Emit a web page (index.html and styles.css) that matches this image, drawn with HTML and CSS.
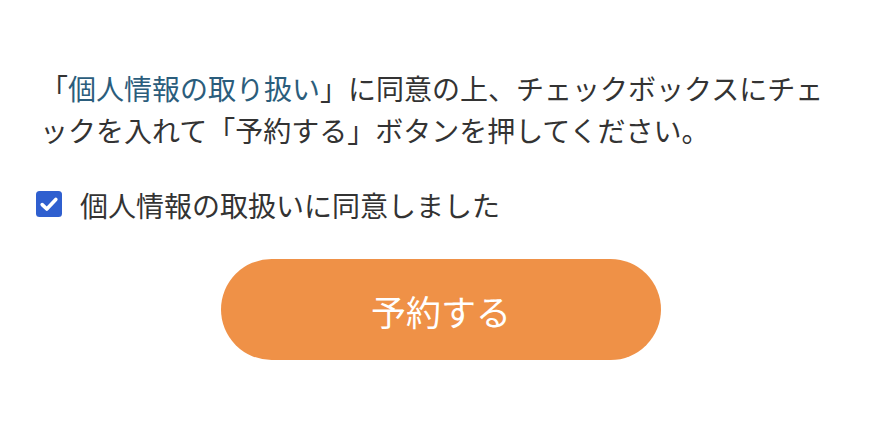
FILE: index.html
```html
<!DOCTYPE html>
<html lang="ja">
<head>
<meta charset="utf-8">
<link rel="stylesheet" href="styles.css">
</head>
<body>
<div class="page">
  <p class="notice">「<a class="link" href="#">個人情報の取り扱い</a>」に同意の上、チェックボックスにチェックを入れて「予約する」ボタンを押してください。</p>
  <label class="agree">
    <span class="box"><svg width="26" height="26" viewBox="0 0 26 26"><rect x="0" y="0" width="26" height="26" rx="3.5" fill="#2f5fcf"/><path d="M6.2 13.6 L10.8 18 L19.8 8.4" fill="none" stroke="#fff" stroke-width="3.6" stroke-linecap="round" stroke-linejoin="round"/></svg></span>
    <span class="agree-text">個人情報の取扱いに同意しました</span>
  </label>
  <div class="actions">
    <button class="submit" type="button">予約する</button>
  </div>
</div>
</body>
</html>
```
FILE: styles.css
```css
html, body {
  margin: 0;
  padding: 0;
  background: #ffffff;
}
body {
  font-family: "Noto Sans CJK JP", "Noto Sans", sans-serif;
  color: #333333;
}
.page {
  width: 876px;
  height: 438px;
  box-sizing: border-box;
  padding: 67px 40px 0 40px;
}
.notice {
  margin: 0;
  font-size: 28px;
  line-height: 42px;
}
.link {
  color: #2b5d7c;
  text-decoration: none;
}
.agree {
  display: flex;
  align-items: center;
  margin: 33px 0 0 -4px;
  font-size: 28px;
  line-height: 42px;
}
.box {
  display: flex;
  width: 26px;
  height: 26px;
  margin-right: 18px;
  margin-top: -2px;
}
.actions {
  display: flex;
  justify-content: center;
  margin-top: 33px;
  padding-left: 6px;
}
.submit {
  width: 440px;
  height: 101px;
  border: none;
  border-radius: 51px;
  background: #ef9147;
  color: #ffffff;
  font-family: "Noto Sans CJK JP", "Noto Sans", sans-serif;
  font-size: 35px;
  padding: 2px 0 0 0;
}
```
